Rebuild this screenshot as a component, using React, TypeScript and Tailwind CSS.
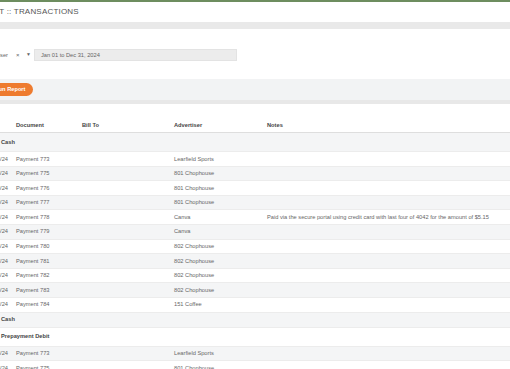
import React from "react";

type Row =
  | { kind: "group"; label: string; h: number }
  | { kind: "row"; date: string; doc: string; adv: string; notes?: string };

const rows: Row[] = [
  { kind: "group", label: "Cash", h: 19 },
  { kind: "row", date: "01/05/24", doc: "Payment 773", adv: "Learfield Sports" },
  { kind: "row", date: "01/08/24", doc: "Payment 775", adv: "801 Chophouse" },
  { kind: "row", date: "01/09/24", doc: "Payment 776", adv: "801 Chophouse" },
  { kind: "row", date: "01/10/24", doc: "Payment 777", adv: "801 Chophouse" },
  {
    kind: "row",
    date: "01/12/24",
    doc: "Payment 778",
    adv: "Canva",
    notes:
      "Paid via the secure portal using credit card with last four of 4042 for the amount of $5.15",
  },
  { kind: "row", date: "01/15/24", doc: "Payment 779", adv: "Canva" },
  { kind: "row", date: "01/16/24", doc: "Payment 780", adv: "802 Chophouse" },
  { kind: "row", date: "01/17/24", doc: "Payment 781", adv: "802 Chophouse" },
  { kind: "row", date: "01/18/24", doc: "Payment 782", adv: "802 Chophouse" },
  { kind: "row", date: "01/19/24", doc: "Payment 783", adv: "802 Chophouse" },
  { kind: "row", date: "01/22/24", doc: "Payment 784", adv: "151 Coffee" },
  { kind: "group", label: "Cash", h: 15 },
  { kind: "group", label: "Prepayment Debit", h: 19 },
  { kind: "row", date: "01/05/24", doc: "Payment 773", adv: "Learfield Sports" },
  { kind: "row", date: "01/08/24", doc: "Payment 775", adv: "801 Chophouse" },
];

export default function App() {
  return (
    <div className="w-[510px] h-[369px] overflow-hidden bg-white font-['Liberation_Sans',Arial,sans-serif]">
      <div className="h-[2px] bg-[#6d8d5f]" />
      <div className="h-[20px] flex items-center">
        <span className="ml-[-30px] whitespace-nowrap text-[8px] tracking-[0.2px] text-[#555]">
          REPORT :: TRANSACTIONS
        </span>
      </div>
      <div className="h-[7px] bg-[#e9e9e9]" />
      <div className="h-[20px]" />
      <div className="h-[12px] flex items-center">
        <div className="w-[16px] flex justify-end pr-[8px]">
          <span className="whitespace-nowrap text-[5.7px] text-[#666]">Advertiser</span>
        </div>
        <span className="w-[10px] text-[6px] text-[#666]">×</span>
        <span className="w-[8px] text-[5px] text-[#666]">▼</span>
        <div className="w-[203px] h-[12px] bg-[#ececec] border border-[#e3e3e3] flex items-center pl-[6px]">
          <span className="text-[5.7px] text-[#666]">Jan 01 to Dec 31, 2024</span>
        </div>
      </div>
      <div className="h-[18px]" />
      <div className="h-[21px] bg-[#f2f3f4] flex items-center">
        <div className="ml-[-13px] h-[13px] w-[46px] rounded-full bg-[#ee7b2f] flex items-center justify-center">
          <span className="text-[5.7px] font-bold text-white whitespace-nowrap">Run Report</span>
        </div>
      </div>
      <div className="h-[4px] bg-[#e8e8e8]" />
      <div className="h-[15px]" />
      <div className="h-[14px] flex items-center border-b border-[#dedede] text-[5.7px] font-bold text-[#444]">
        <div className="w-[16px] shrink-0" />
        <div className="w-[66px] shrink-0">Document</div>
        <div className="w-[92px] shrink-0">Bill To</div>
        <div className="w-[93px] shrink-0">Advertiser</div>
        <div className="flex-1">Notes</div>
      </div>
      {rows.map((r, i) => {
        const bg = i % 2 === 0 ? "bg-[#f4f5f6]" : "bg-white";
        if (r.kind === "group") {
          return (
            <div
              key={i}
              className={`${bg} flex items-center border-b border-[#ececec] pl-[1px] text-[5.7px] font-bold text-[#444]`}
              style={{ height: r.h }}
            >
              {r.label}
            </div>
          );
        }
        return (
          <div
            key={i}
            className={`${bg} h-[14.6px] flex items-center border-b border-[#ececec] text-[5.7px] text-[#666]`}
          >
            <div className="w-[16px] shrink-0 flex justify-end pr-[8px]">
              <span className="whitespace-nowrap">{r.date}</span>
            </div>
            <div className="w-[66px] shrink-0 whitespace-nowrap">{r.doc}</div>
            <div className="w-[92px] shrink-0" />
            <div className="w-[93px] shrink-0 whitespace-nowrap">{r.adv}</div>
            <div className="flex-1 whitespace-nowrap">{r.notes ?? ""}</div>
          </div>
        );
      })}
    </div>
  );
}
